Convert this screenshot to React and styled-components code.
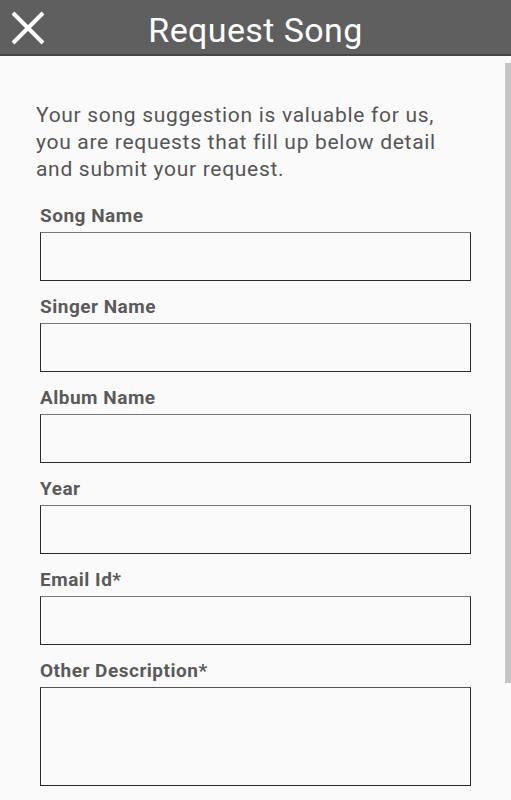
import React from 'react';
import styled, { createGlobalStyle } from 'styled-components';

const GlobalStyle = createGlobalStyle`
    html, body {
        margin: 0;
        padding: 0;
        background: #fafafa;
    }
    * {
        box-sizing: border-box;
    }
`

const Page = styled.div`
    position: relative;
    width: 511px;
    height: 800px;
    overflow: hidden;
    background: #fafafa;
    font-family: Roboto, "Noto Sans", sans-serif;
`

const Header = styled.header`
    height: 56px;
    background: #5f5f5f;
    border-bottom: 2px solid #474747;
    display: flex;
    align-items: center;
    justify-content: center;
    position: relative;
`

const Close = styled.button`
    position: absolute;
    left: 10px;
    top: 10px;
    width: 36px;
    height: 36px;
    padding: 0;
    border: none;
    background: none;
    cursor: pointer;
`

const Title = styled.h1`
    margin: 0;
    padding-top: 6px;
    font-size: 34px;
    font-weight: 400;
    letter-spacing: 0.4px;
    color: #fff;
`

const Content = styled.div`
    padding: 46px 40px 0 36px;
`

const Intro = styled.p`
    margin: 0 0 21px;
    font-size: 21px;
    line-height: 27px;
    letter-spacing: 0.7px;
    color: #555;
    white-space: nowrap;
`

const Form = styled.form`
    display: flex;
    flex-direction: column;
    gap: 14px;
    padding-left: 4px;
`

const Field = styled.label`
    display: flex;
    flex-direction: column;
    gap: 4px;
`

const Label = styled.span`
    font-size: 19px;
    line-height: 24px;
    font-weight: 700;
    letter-spacing: 0.5px;
    color: #5a5a5a;
`

const Input = styled.input`
    width: 431px;
    height: 49px;
    border: 1.5px solid #2a2a2a;
    border-top-color: #777;
    background: #fafafa;
    outline: none;
`

const TextArea = styled.textarea`
    width: 431px;
    height: 99px;
    border: 1.5px solid #2a2a2a;
    border-top-color: #555;
    background: #fafafa;
    resize: none;
    outline: none;
`

const Scrollbar = styled.div`
    position: absolute;
    right: 0;
    top: 63px;
    width: 6px;
    height: 620px;
    background: #c4c4c4;
`

const fields = ['Song Name', 'Singer Name', 'Album Name', 'Year', 'Email Id*'];

const App = () => {
    return (
        <Page>
            <GlobalStyle />
            <Header>
                <Close aria-label="close">
                    <svg width="36" height="36" viewBox="0 0 36 36">
                        <path d="M3 3 L33 33 M33 3 L3 33" stroke="#fff" strokeWidth="4" />
                    </svg>
                </Close>
                <Title>Request Song</Title>
            </Header>
            <Content>
                <Intro>
                    Your song suggestion is valuable for us,<br />
                    you are requests that fill up below detail<br />
                    and submit your request.
                </Intro>
                <Form>
                    {fields.map(f => (
                        <Field key={f}>
                            <Label>{f}</Label>
                            <Input />
                        </Field>
                    ))}
                    <Field>
                        <Label>Other Description*</Label>
                        <TextArea />
                    </Field>
                </Form>
            </Content>
            <Scrollbar />
        </Page>
    );
};

export default App;
